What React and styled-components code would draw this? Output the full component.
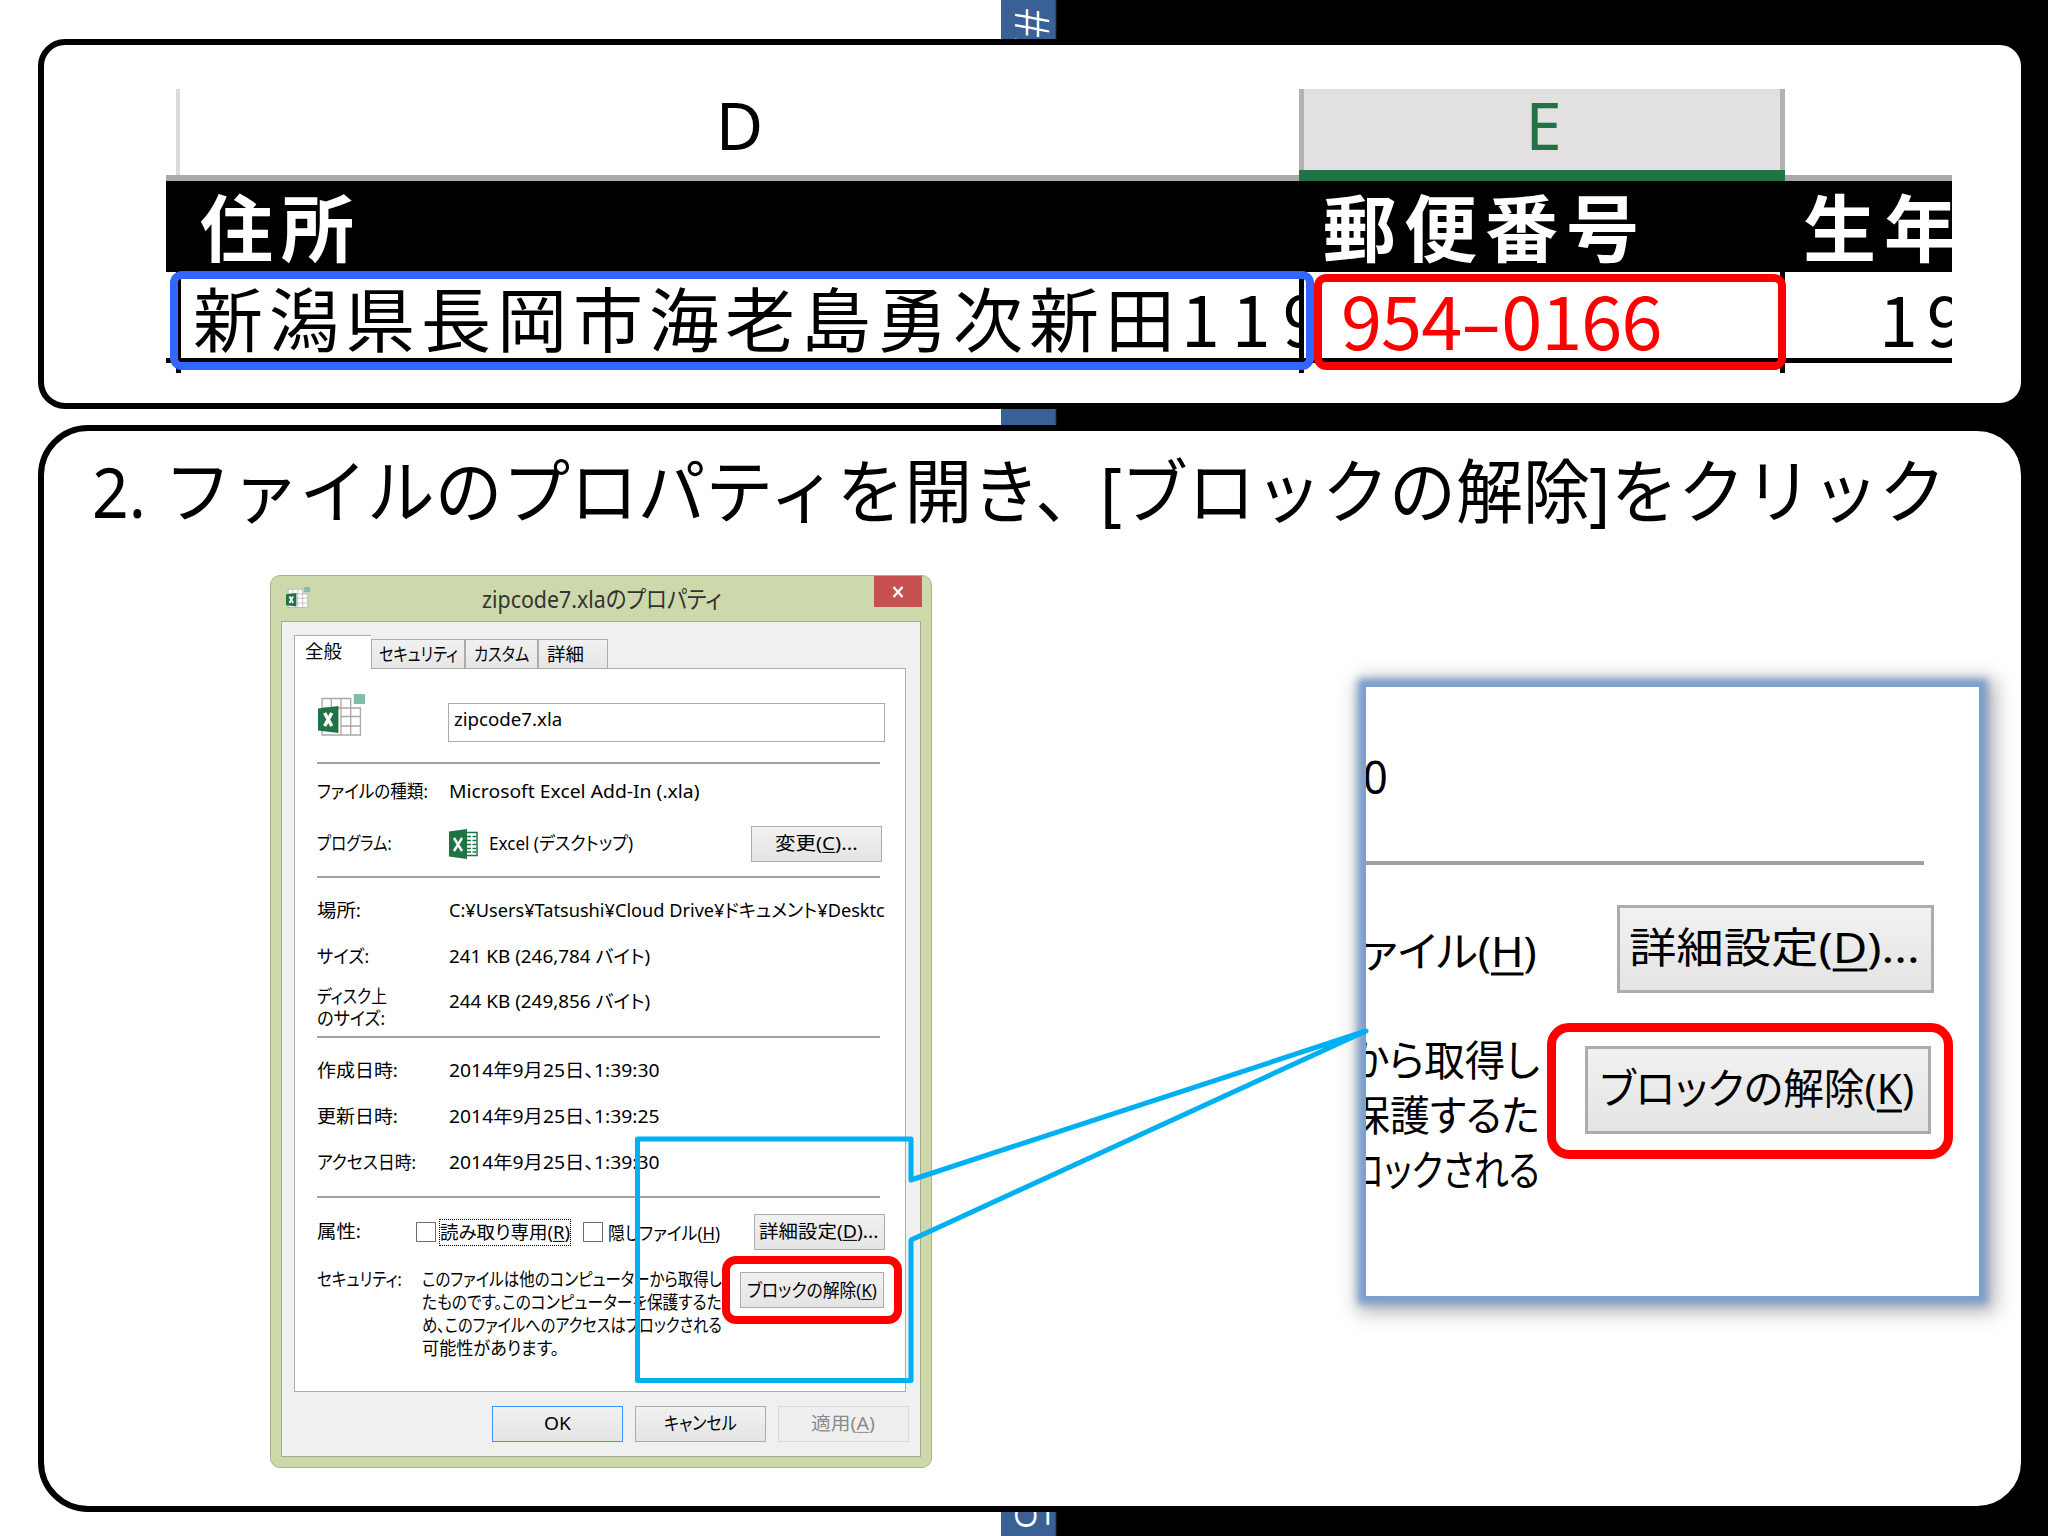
import React, { useLayoutEffect, useRef, useState } from "react";
import styled, { createGlobalStyle, css } from "styled-components";

const jp = '"Noto Sans CJK JP", sans-serif';
const ui = '"Noto Sans", "Noto Sans CJK JP", sans-serif';

// one line of text, squeezed or stretched to the given width
function Fit({ width, children, ...rest }) {
	const ref = useRef(null);
	const [scale, setScale] = useState(1);

	useLayoutEffect(() => {
		const natural = ref.current.offsetWidth;
		if (natural > 0) setScale(width / natural);
	}, [width]);

	return (
		<FitBox $width={width} {...rest}>
			<FitText ref={ref} style={{ transform: `translateY(-0.06em) scaleX(${scale})` }}>{children}</FitText>
		</FitBox>
	);
}

function AddInIcon({ width, height }) {
	return (
		<svg width={width} height={height} viewBox="0 0 46 42" preserveAspectRatio="none">
			<path d="M4 4.500H32V14H41.500V41H4Z" fill="#ffffff" stroke="#a9a9a9" strokeWidth="1.300" />
			<path d="M13 5V14M22.500 5V41M32 14V41M4 14H32M22.500 22.500H41M22.500 32H41" stroke="#a9a9a9" strokeWidth="1.300" fill="none" />
			<path d="M0 14.500L20 12V39L0 36.500Z" fill="#217346" />
			<path d="M6.500 19L13.500 32M13.500 19L6.500 32" stroke="#ffffff" strokeWidth="3.400" />
			<rect x="35" y="0" width="11" height="10" fill="#83bda5" />
		</svg>
	);
}

function ExcelIcon() {
	return (
		<svg width="29" height="30" viewBox="0 0 29 30">
			<rect x="16" y="3.500" width="12" height="23" fill="#ffffff" stroke="#217346" strokeWidth="1.500" />
			<path d="M18 7.500H22M23.500 7.500H27M18 11.500H22M23.500 11.500H27M18 15.500H22M23.500 15.500H27M18 19.500H22M23.500 19.500H27M18 23H22M23.500 23H27" stroke="#217346" strokeWidth="1.700" />
			<path d="M0 2.500L18 0V30L0 27.500Z" fill="#217346" />
			<path d="M5 9L13 22M13 9L5 22" stroke="#ffffff" strokeWidth="2.400" />
		</svg>
	);
}

function SheetPanel() {
	return (
		<Panel $height={370} $radius={27}>
			<Sheet>
				<SheetRow $height={92}>
					<HeadD><ColumnName>D</ColumnName></HeadD>
					<HeadE>
						<HeadInner><ColumnName>E</ColumnName></HeadInner>
						<HeadMark />
					</HeadE>
					<HeadRest />
				</SheetRow>
				<SheetRow $height={91} $dark>
					<Title $width={1123} $left={34}>住所</Title>
					<Title $width={480} $left={34}>郵便番号</Title>
					<Title $width={183} $left={34}>生年</Title>
				</SheetRow>
				<SheetRow $height={101}>
					<DataCell $width={10} />
					<DataCell $width={1128} $leftLine $rightLine>
						<Address>新潟県長岡市海老島勇次新田<Digits>119</Digits></Address>
					</DataCell>
					<DataCell $width={481} $rightLine>
						<ZipCode>954<Dash>-</Dash>0166</ZipCode>
					</DataCell>
					<DataCell $width={167}>
						<Birth>19</Birth>
					</DataCell>
				</SheetRow>
				<Frame $color="#3366ff" $x={4} $y={182} $w={1144} $h={99} />
				<Frame $color="#ff0000" $x={1148} $y={185} $w={472} $h={96} />
			</Sheet>
		</Panel>
	);
}

const tabs = [
	{ name: "全般", width: 77, text: 37, active: true },
	{ name: "セキュリティ", width: 94, text: 79 },
	{ name: "カスタム", width: 73, text: 55 },
	{ name: "詳細", width: 70, text: 37, left: 8 },
];

const sizes = [
	{ label: "場所:", lw: 44, value: "C:¥Users¥Tatsushi¥Cloud Drive¥ドキュメント¥Desktc", vw: 436 },
	{ label: "サイズ:", lw: 52, value: "241 KB (246,784 バイト)", vw: 201 },
];

const dates = [
	{ label: "作成日時:", lw: 81, value: "2014年9月25日、1:39:30" },
	{ label: "更新日時:", lw: 81, value: "2014年9月25日、1:39:25" },
	{ label: "アクセス日時:", lw: 99, value: "2014年9月25日、1:39:30" },
];

function PropertyDialog() {
	return (
		<Dialog>
			<TitleBar>
				<IconWrap><AddInIcon width={24} height={21} /></IconWrap>
				<DialogTitle width={240}>zipcode7.xlaのプロパティ</DialogTitle>
				<CloseBtn>
					<svg width="12" height="12" viewBox="0 0 12 12">
						<path d="M1.500 1L10.500 11M10.500 1L1.500 11" stroke="#ffffff" strokeWidth="2.400" />
					</svg>
				</CloseBtn>
			</TitleBar>
			<Client>
				<Tabs>
					{tabs.map((tab) => (
						<Tab key={tab.name} $width={tab.width} $active={tab.active} $left={tab.left}>
							<Fit width={tab.text}>{tab.name}</Fit>
						</Tab>
					))}
				</Tabs>
				<Page>
					<FileRow>
						<AddInIcon width={47} height={42} />
						<NameInput><Fit width={108}>zipcode7.xla</Fit></NameInput>
					</FileRow>
					<Divider />
					<Row $height={55}>
						<Label><Fit width={111}>ファイルの種類:</Fit></Label>
						<Fit width={250}>Microsoft Excel Add-In (.xla)</Fit>
					</Row>
					<Row $height={49} $bottom={8}>
						<Label><Fit width={75}>プログラム:</Fit></Label>
						<ProgramName>
							<ExcelIcon />
							<Fit width={144}>Excel (デスクトップ)</Fit>
						</ProgramName>
						<Button $width={131}><Fit width={83}>変更(<u>C</u>)...</Fit></Button>
					</Row>
					<Divider />
					<Group>
						{sizes.map((row) => (
							<Row key={row.label} $height={46}>
								<Label><Fit width={row.lw}>{row.label}</Fit></Label>
								<Fit width={row.vw}>{row.value}</Fit>
							</Row>
						))}
					</Group>
					<DiskRow>
						<Label>
							<Fit width={70}>ディスク上</Fit>
							<Fit width={68}>のサイズ:</Fit>
						</Label>
						<DiskValue><Fit width={201}>244 KB (249,856 バイト)</Fit></DiskValue>
					</DiskRow>
					<Divider />
					<Group $bottom={10}>
						{dates.map((row) => (
							<Row key={row.label} $height={46}>
								<Label><Fit width={row.lw}>{row.label}</Fit></Label>
								<Fit width={211}>{row.value}</Fit>
							</Row>
						))}
					</Group>
					<Divider />
					<Row $height={68}>
						<Label $width={99}><Fit width={44}>属性:</Fit></Label>
						<CheckBox />
						<Focused><Fit width={130}>読み取り専用(<u>R</u>)</Fit></Focused>
						<CheckBox $left={12} />
						<HiddenName><Fit width={112}>隠しファイル(<u>H</u>)</Fit></HiddenName>
						<Button $width={131}><Fit width={120}>詳細設定(<u>D</u>)...</Fit></Button>
					</Row>
					<SecurityRow>
						<Label $width={105}><Fit width={85}>セキュリティ:</Fit></Label>
						<Message>
							<Fit width={300}>このファイルは他のコンピューターから取得し</Fit>
							<Fit width={300}>たものです。このコンピューターを保護するた</Fit>
							<Fit width={300}>め、このファイルへのアクセスはブロックされる</Fit>
							<Fit width={137}>可能性があります。</Fit>
						</Message>
						<Unblock>
							<Button $width={144}><Fit width={130}>ブロックの解除(<u>K</u>)</Fit></Button>
						</Unblock>
					</SecurityRow>
				</Page>
				<Footer>
					<Button $width={131} $primary><Fit width={27}>OK</Fit></Button>
					<Button $width={131}><Fit width={73}>キャンセル</Fit></Button>
					<Button $width={131} $disabled><Fit width={64}>適用(<u>A</u>)</Fit></Button>
				</Footer>
			</Client>
		</Dialog>
	);
}

function Magnified() {
	return (
		<Lens>
			<LensTop><LensDigit width={25}>0</LensDigit></LensTop>
			<LensLine />
			<LensRow>
				<LensFile><Fit width={175}>ァイル(<u>H</u>)</Fit></LensFile>
				<BigButton $width={317}><Fit width={291}>詳細設定(<u>D</u>)...</Fit></BigButton>
			</LensRow>
			<LensBottom>
				<LensText>
					<Fit width={190}>から取得し</Fit>
					<Fit width={190}>保護するた</Fit>
					<Fit width={190}>ロックされる</Fit>
				</LensText>
				<BigUnblock>
					<BigButton $width={346}><Fit width={314}>ブロックの解除(<u>K</u>)</Fit></BigButton>
				</BigUnblock>
			</LensBottom>
		</Lens>
	);
}

function App() {
	return (
		<>
			<GlobalStyle />
			<Stage>
				<BandText $top={8}>#A</BandText>
				<BandText $top={1503}>5</BandText>
				<SheetPanel />
				<Panel $height={1087} $radius={50}>
					<Heading>
						<Fit width={54}>2.</Fit>
						<HeadingPart $left={18} width={939}>ファイルのプロパティを開き、</HeadingPart>
						<HeadingPart $left={-3} width={22}>[</HeadingPart>
						<HeadingPart $left={-1} width={469}>ブロックの解除</HeadingPart>
						<HeadingPart $left={-1} width={21}>]</HeadingPart>
						<HeadingPart $left={1} width={335}>をクリック</HeadingPart>
					</Heading>
					<Body>
						<PropertyDialog />
						<Magnified />
					</Body>
				</Panel>
				<Callout viewBox="0 0 2048 1536">
					<path d="M637.500 1139H911V1180L1366 1031L911 1240V1380.500H637.500Z" />
				</Callout>
			</Stage>
		</>
	);
}

const GlobalStyle = createGlobalStyle`
  body {
    margin: 0;
    background: #ffffff;
  }
  * {
    box-sizing: border-box;
  }
`;

const Stage = styled.div`
  position: relative;
  width: 2048px;
  height: 1536px;
  overflow: hidden;
  display: flex;
  flex-direction: column;
  gap: 16px;
  padding: 39px 21px 24px 38px;
  font-family: ${ui};
  color: #000000;
  background: linear-gradient(
    to right,
    #ffffff 1001px,
    #3a6196 1001px,
    #3a6196 1055px,
    #000000 1057px
  );
`;

const BandText = styled.div`
  position: absolute;
  left: 1006px;
  top: ${(props) => props.$top}px;
  width: 54px;
  writing-mode: vertical-rl;
  font-size: 47px;
  font-weight: 300;
  line-height: 54px;
  color: #ffffff;
`;

const Panel = styled.section`
  position: relative;
  flex: none;
  height: ${(props) => props.$height}px;
  border: 6px solid #000000;
  border-radius: ${(props) => props.$radius}px;
  background-color: #ffffff;
`;

const FitBox = styled.div`
  flex: none;
  width: ${(props) => props.$width}px;
  white-space: nowrap;
`;

const FitText = styled.span`
  display: inline-block;
  transform-origin: 0 50%;

  u {
    text-underline-offset: 0.12em;
    text-decoration-thickness: 0.08em;
  }
`;

const Sheet = styled.div`
  position: relative;
  width: 1786px;
  margin: 44px 0 0 122px;
`;

const SheetRow = styled.div`
  display: flex;
  height: ${(props) => props.$height}px;
  overflow: hidden;
  background-color: ${(props) => (props.$dark ? "#000000" : "#ffffff")};
`;

const HeadD = styled.div`
  display: flex;
  justify-content: center;
  flex: none;
  width: 1133px;
  border-bottom: 6px solid #a9a9a9;

  &::before {
    content: "";
    width: 4px;
    margin: 0 auto 0 10px;
    background-color: #dcdcdc;
  }
  &::after {
    content: "";
    margin-left: auto;
  }
`;

const HeadE = styled.div`
  display: flex;
  flex-direction: column;
  flex: none;
  width: 486px;
`;

const HeadInner = styled.div`
  display: flex;
  justify-content: center;
  height: 81px;
  padding-left: 3px;
  border: solid #b2b2b2;
  border-width: 0 5px;
  background-color: #e2e0e1;
  color: #217346;
`;

const HeadMark = styled.div`
  height: 11px;
  background-color: #217346;
`;

const HeadRest = styled.div`
  flex: 1;
  border-bottom: 6px solid #a9a9a9;
`;

const ColumnName = styled.div`
  font-size: 65px;
  line-height: 73px;
`;

const Title = styled.div`
  flex: none;
  width: ${(props) => props.$width}px;
  padding-left: ${(props) => props.$left}px;
  font-family: ${jp};
  font-size: 73px;
  font-weight: 700;
  line-height: 87px;
  letter-spacing: 8px;
  white-space: nowrap;
  overflow: hidden;
  color: #ffffff;
`;

const DataCell = styled.div`
  flex: none;
  width: ${(props) => props.$width}px;
  height: 101px;
  border: solid #000000;
  border-width: 0 ${(props) => (props.$rightLine ? 5 : 0)}px 0
    ${(props) => (props.$leftLine ? 5 : 0)}px;
  overflow: hidden;
  white-space: nowrap;
  font-family: ${jp};
  background: linear-gradient(#000000, #000000) 0 86px / 100% 5px no-repeat;
`;

const Address = styled.div`
  padding-left: 12px;
  font-size: 70px;
  line-height: 89px;
  letter-spacing: 6px;
`;

const Digits = styled.span`
  letter-spacing: 12px;
`;

const ZipCode = styled.div`
  padding-left: 37px;
  font-size: 74px;
  line-height: 91px;
  letter-spacing: -1px;
  color: #ff0000;
`;

const Dash = styled.span`
  display: inline-block;
  width: 40px;
  text-align: center;
  letter-spacing: 0;
  transform: scaleX(1.7);
`;

const Birth = styled.div`
  padding-left: 94px;
  font-size: 70px;
  line-height: 89px;
  letter-spacing: 9px;
`;

// coloured marker laid over a cell
const Frame = styled.div`
  position: absolute;
  left: ${(props) => props.$x}px;
  top: ${(props) => props.$y}px;
  width: ${(props) => props.$w}px;
  height: ${(props) => props.$h}px;
  border: 8px solid ${(props) => props.$color};
  border-radius: 12px;
`;

const Heading = styled.h1`
  display: flex;
  height: 144px;
  margin: 0;
  padding-left: 48px;
  font-size: 70px;
  font-weight: 400;
  line-height: 128px;
`;

const HeadingPart = styled(Fit)`
  margin-left: ${(props) => props.$left}px;
`;

const Body = styled.div`
  display: flex;
  align-items: flex-start;
  gap: 434px;
  padding-left: 226px;
  font-feature-settings: "palt";
`;

const Dialog = styled.div`
  width: 662px;
  height: 893px;
  border: 1px solid #a9b38b;
  border-radius: 10px;
  background-color: #cdd9aa;
  font-size: 18.5px;
  line-height: 22px;
`;

const TitleBar = styled.div`
  display: flex;
  height: 45px;
  padding-left: 15px;
`;

const IconWrap = styled.div`
  display: flex;
  width: 196px;
  padding-top: 11px;
`;

const DialogTitle = styled(Fit)`
  margin-right: 152px;
  font-size: 23.5px;
  line-height: 49px;
  color: #333333;
`;

const CloseBtn = styled.div`
  display: flex;
  align-items: center;
  justify-content: center;
  width: 48px;
  height: 31px;
  background-color: #c75050;
`;

const Client = styled.div`
  height: 836px;
  margin: 0 10px;
  padding: 13px 0 0 12px;
  border: 1px solid #a3ab8e;
  background-color: #f0f0f1;
`;

const Tabs = styled.div`
  display: flex;
  align-items: flex-end;
  height: 34px;
  margin-bottom: -1px;
`;

const Tab = styled.div`
  position: relative;
  display: flex;
  justify-content: ${(props) => (props.$left ? "flex-start" : "center")};
  width: ${(props) => props.$width}px;
  height: ${(props) => (props.$active ? 34 : 30)}px;
  padding-left: ${(props) => props.$left || 0}px;
  border: 1px solid #acacac;
  line-height: 29px;
  background: linear-gradient(#f1f1f2, #e6e6e7);

  ${(props) =>
    props.$active &&
    css`
      justify-content: flex-start;
      padding-left: 10px;
      border-bottom: none;
      border-right: none;
      line-height: 31px;
      background: #ffffff;
    `}
`;

const Page = styled.div`
  width: 612px;
  height: 724px;
  padding-left: 22px;
  border: 1px solid #acacac;
  background-color: #ffffff;
`;

const FileRow = styled.div`
  display: flex;
  align-items: flex-start;
  height: 93px;
  padding: 25px 0 0 1px;
`;

const NameInput = styled.div`
  width: 437px;
  height: 39px;
  margin: 9px 0 0 83px;
  padding-left: 5px;
  border: 1px solid #ababab;
  line-height: 31px;
`;

const Divider = styled.div`
  width: 563px;
  height: 2px;
  background-color: #a0a0a0;
`;

const Row = styled.div`
  display: flex;
  align-items: center;
  height: ${(props) => props.$height}px;
  margin-bottom: ${(props) => props.$bottom || 0}px;
`;

const Label = styled.div`
  flex: none;
  width: ${(props) => props.$width || 132}px;
`;

const ProgramName = styled.div`
  display: flex;
  align-items: center;
  gap: 11px;
  width: 302px;
`;

const Group = styled.div`
  padding: 10px 0 ${(props) => props.$bottom || 0}px;
`;

const DiskRow = styled.div`
  display: flex;
  height: 56px;
  padding-top: 6px;
`;

const DiskValue = styled.div`
  padding-top: 5px;
`;

const Button = styled.div`
  display: flex;
  align-items: center;
  justify-content: center;
  flex: none;
  width: ${(props) => props.$width}px;
  height: 36px;
  padding-right: 1px;
  border: 1px solid ${(props) => (props.$primary ? "#3399ff" : "#acacac")};
  color: ${(props) => (props.$disabled ? "#8b8b8b" : "#000000")};
  background: linear-gradient(#f1f1f2, #e4e4e5);

  ${(props) =>
    props.$disabled &&
    css`
      border-color: #d9d9d9;
      background: #efeff0;
    `}
`;

const CheckBox = styled.div`
  flex: none;
  width: 20px;
  height: 20px;
  margin-left: ${(props) => props.$left || 0}px;
  border: 1px solid #707070;
  background-color: #ffffff;
`;

const Focused = styled.div`
  margin-left: 3px;
  padding: 2px 0 1px;
  border: 1px dotted #000000;
`;

const HiddenName = styled.div`
  width: 151px;
  padding: 3px 0 0 5px;
`;

const SecurityRow = styled.div`
  display: flex;
  align-items: flex-start;
  padding-top: 2px;
  line-height: 23px;
`;

const Message = styled.div`
  width: 318px;
`;

const Unblock = styled.div`
  position: relative;
  margin-top: 4px;

  &::after {
    content: "";
    position: absolute;
    inset: -16px -18px;
    border: 8px solid #ff0000;
    border-radius: 14px;
  }
`;

const Footer = styled.div`
  display: flex;
  justify-content: flex-end;
  gap: 12px;
  padding: 14px 11px 0 0;
`;

const Lens = styled.div`
  width: 613px;
  height: 609px;
  margin-top: 112px;
  background-color: #ffffff;
  box-shadow:
    0 0 7px 8px #7b9fcd,
    4px 4px 18px 12px rgba(60, 60, 70, 0.4);
  font-size: 42px;
  line-height: 55px;
`;

const LensTop = styled.div`
  display: flex;
  height: 174px;
  padding-top: 65px;
  overflow: hidden;
`;

const LensDigit = styled(Fit)`
  margin-left: -3px;
  font-size: 45px;
`;

const LensLine = styled.div`
  width: 558px;
  height: 4px;
  background-color: #a0a0a0;
`;

const LensRow = styled.div`
  display: flex;
  align-items: center;
  height: 128px;
  padding-top: 40px;
`;

const LensFile = styled.div`
  display: flex;
  justify-content: flex-end;
  width: 171px;
  margin-right: 80px;
  padding-top: 9px;
  overflow: hidden;
`;

const BigButton = styled(Button)`
  height: 88px;
  padding: 0 3px 0 0;
  border-width: 3px;
`;

const LensBottom = styled.div`
  display: flex;
  align-items: flex-start;
  padding-top: 42px;
`;

const LensText = styled.div`
  display: flex;
  flex-direction: column;
  align-items: flex-end;
  width: 174px;
  margin-right: 45px;
  overflow: hidden;
`;

const BigUnblock = styled.div`
  position: relative;
  margin-top: 11px;

  &::after {
    content: "";
    position: absolute;
    inset: -23px -22px -25px -38px;
    border: 9px solid #ff0000;
    border-radius: 22px;
  }
`;

const Callout = styled.svg`
  position: absolute;
  left: 0;
  top: 0;
  width: 2048px;
  height: 1536px;
  fill: none;
  stroke: #00b0f0;
  stroke-width: 5px;
  stroke-linejoin: round;
  pointer-events: none;
`;

export default App;
